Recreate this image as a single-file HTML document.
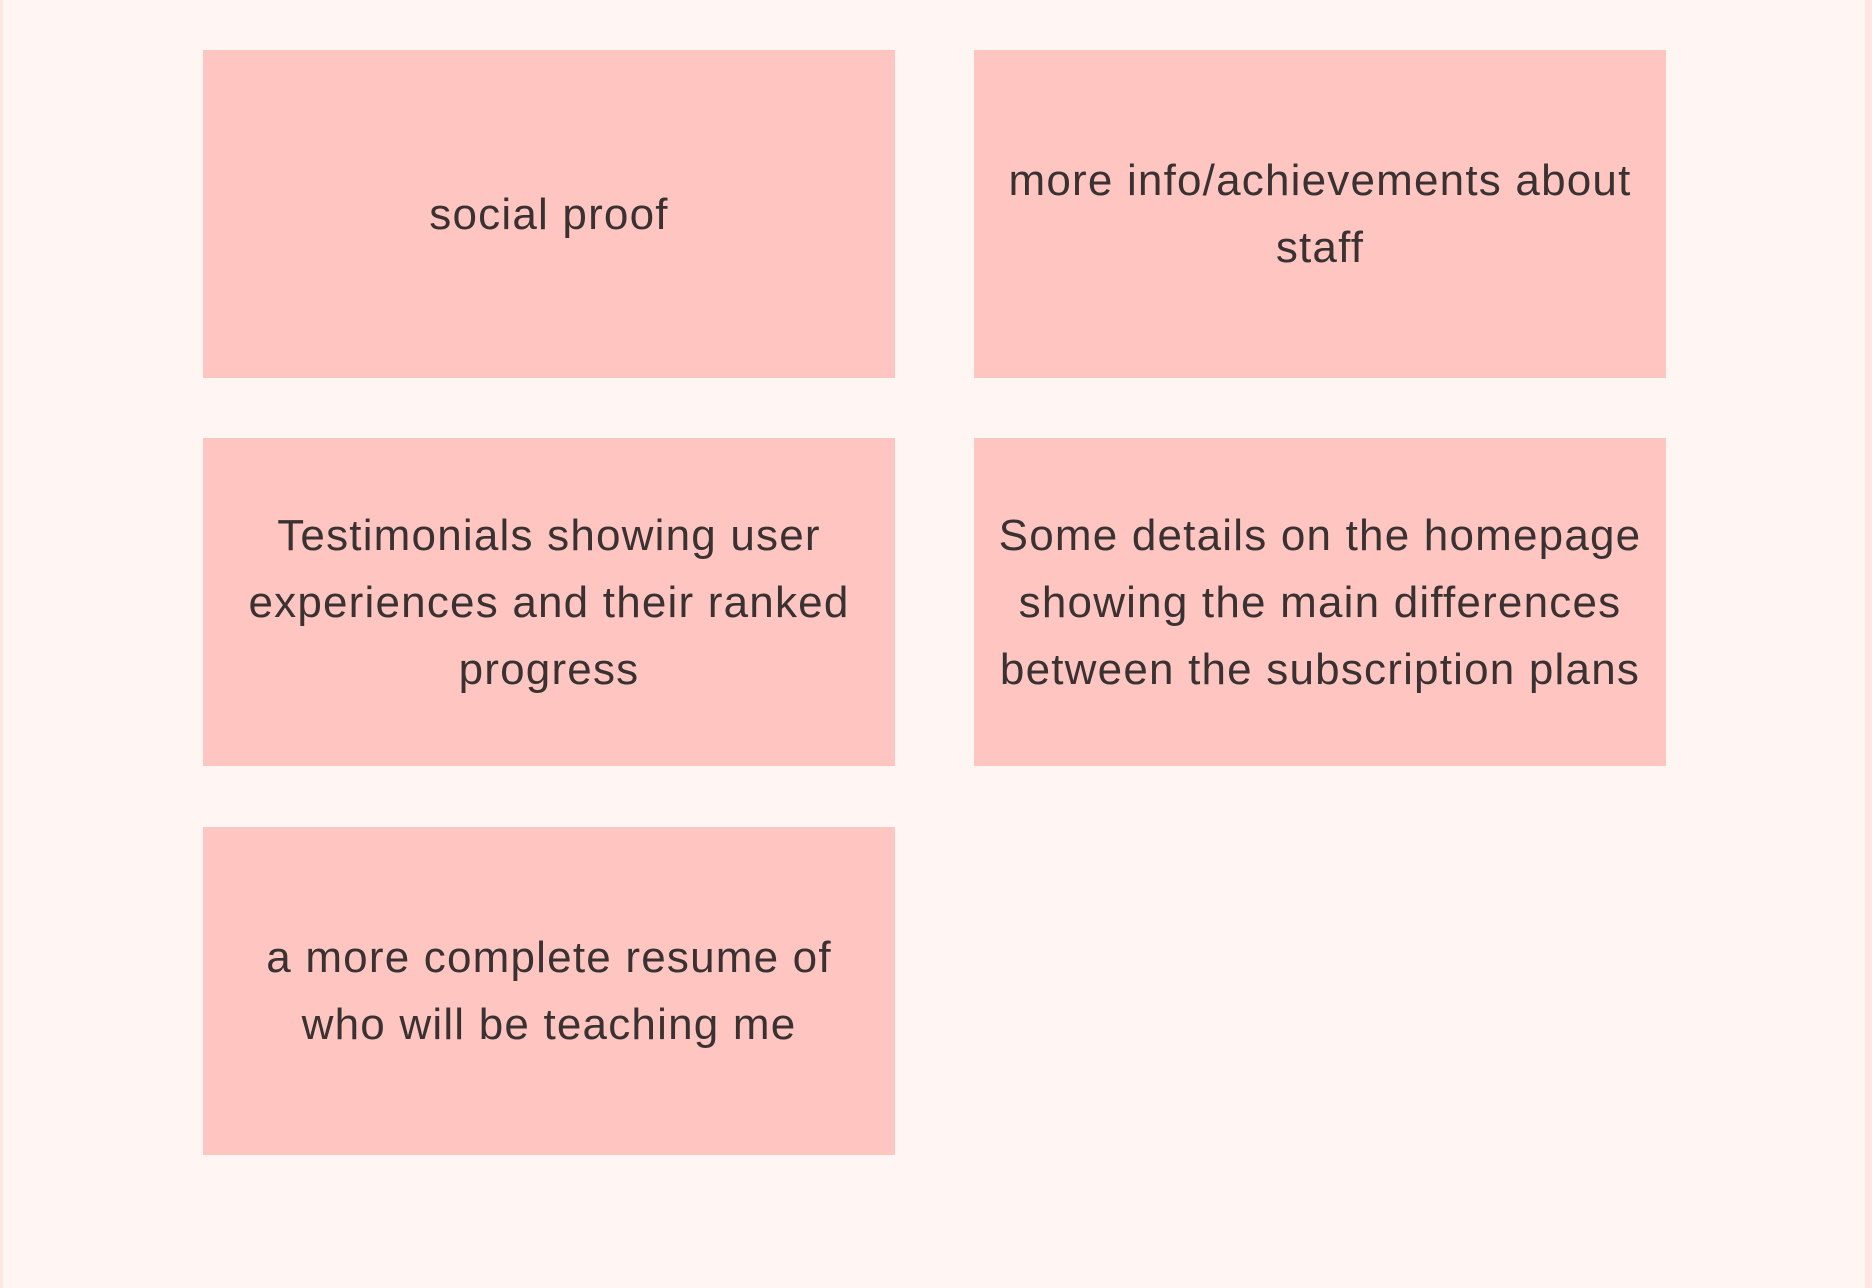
<!DOCTYPE html>
<html><head><meta charset="utf-8"><style>
html,body{margin:0;padding:0}
body{width:1872px;height:1288px;background:#fff5f3;position:relative;overflow:hidden;font-family:"Liberation Sans",sans-serif}
.lb{position:absolute;left:0;top:0;width:3px;height:1288px;background:#ffe6e2}
.rb{position:absolute;left:1865px;top:0;width:7px;height:1288px;background:#ffe6e2}
.c{position:absolute;width:692px;height:328px;background:#ffc6c1;display:flex;align-items:center;justify-content:center;text-align:center;color:#3a3232;font-size:44px;letter-spacing:1.2px;line-height:67px;box-sizing:border-box;padding:0;white-space:nowrap}
</style></head><body>
<div class="lb"></div><div class="rb"></div>
<div class="c" style="left:203px;top:50px">social proof</div>
<div class="c" style="left:974px;top:50px">more info/achievements about<br>staff</div>
<div class="c" style="left:203px;top:438px">Testimonials showing user<br>experiences and their ranked<br>progress</div>
<div class="c" style="left:974px;top:438px">Some details on the homepage<br>showing the main differences<br>between the subscription plans</div>
<div class="c" style="left:203px;top:827px">a more complete resume of<br>who will be teaching me</div>
</body></html>
